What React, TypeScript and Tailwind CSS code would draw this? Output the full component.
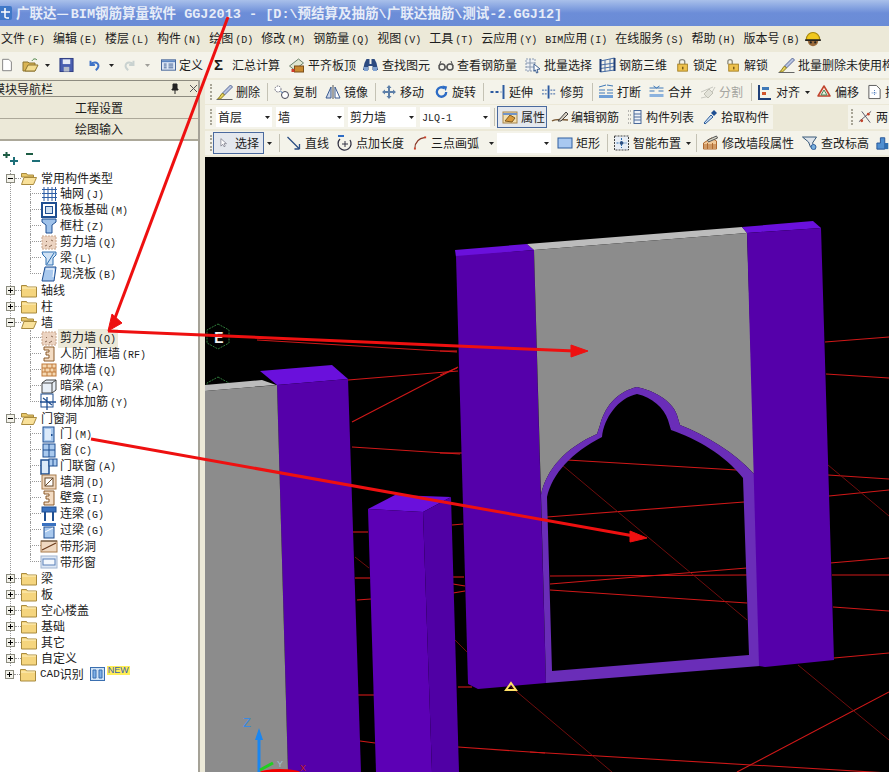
import React from 'react';

const Ic = ({ w = 16, children }: { w?: number; children: React.ReactNode }) => (
  <svg width={w} height={16} viewBox="0 0 16 16" className="shrink-0 overflow-visible">
    {children}
  </svg>
);

const Lat = ({ children }: { children: React.ReactNode }) => (
  <span className="font-['Liberation_Mono',monospace] text-[10px]">{children}</span>
);

const Arrow = ({ className = '' }: { className?: string }) => (
  <svg width={5} height={3} viewBox="0 0 5 3" className={`shrink-0 ${className}`}>
    <path d="M0 0h5L2.5 3z" fill="#222" />
  </svg>
);

const Grip = () => <div className="w-[2px] h-4 shrink-0 border-l-2 border-dotted border-[#a8a597]" />;
const Sep = () => <div className="w-px h-[18px] shrink-0 mr-[5px] bg-[#c4c2b4]" />;

const Tool = ({ w, icon, label, gray, children }: { w?: string; icon: React.ReactNode; label: React.ReactNode; gray?: boolean; children?: React.ReactNode }) => (
  <div className={`flex items-center gap-[3px] shrink-0 whitespace-nowrap ${w ?? ''} ${gray ? 'text-[#a5a5a0]' : ''}`}>
    {icon}
    <span>{label}</span>
    {children}
  </div>
);

const Select = ({ w, children }: { w: string; children?: React.ReactNode }) => (
  <div className={`flex items-center justify-between h-5 bg-white pl-[2px] pr-[2px] shrink-0 ${w}`}>
    <span>{children}</span>
    <Arrow />
  </div>
);

// toolbar icons
const blue = '#3d6fb8';
const NewDoc = () => <Ic w={14}><path d="M3 1.5h7l3 3v10H3z" fill="#fff" stroke="#777" /></Ic>;
const OpenIc = () => <Ic w={18}><path d="M1 5h5l1 1h6v8H1z" fill="#d9b454" stroke="#8c7430" /><path d="M3 14l3-6h10l-3 6z" fill="#f3dc8e" stroke="#8c7430" /><path d="M10 4c1-2 3-3 5-1" stroke="#3f7d3a" fill="none" /></Ic>;
const SaveIc = () => <Ic w={15}><rect x="1" y="1" width="14" height="14" fill="#4a5fb0" stroke="#2b3a80" /><rect x="4" y="2" width="8" height="5" fill="#e8ecf5" /><rect x="5" y="10" width="6" height="5" fill="#b5bcc9" /></Ic>;
const UndoIc = ({ c }: { c: string }) => <Ic w={14}><path d="M4 3v5h5M4.5 7.5C7 4 12 4.500 13 8c.6 2.500-1 4.500-3 6" fill="none" stroke={c} strokeWidth="2.200" /></Ic>;
const RedoIc = () => <Ic w={14}><path d="M12 3v5H7M11.500 7.500C9 4 4 4.500 3 8c-.6 2.500 1 4.500 3 6" fill="none" stroke="#c9d2d0" strokeWidth="2.200" /></Ic>;
const DefIc = () => <Ic w={15}><rect x="0.500" y="2.500" width="15" height="11" fill="#dfe8f5" stroke="#3e5f95" /><rect x="1" y="3" width="14" height="2" fill="#5c86c2" /><path d="M3 7h3M3 9h3M3 11h3M8 7h5M8 9h5M8 11h5" stroke="#3e5f95" /></Ic>;
const AlignTop = () => <Ic w={17}><path d="M1 9l9-7 5 4-9 7z" fill="#dfe6d0" stroke="#6a7f6a" /><rect x="6" y="9" width="9" height="6" fill="#c8892f" stroke="#7a4f1a" /><rect x="3" y="12" width="3" height="3" fill="#d23c2b" /></Ic>;
const Binoc = () => <Ic w={17}><path d="M2 6l2-4h3v5h2V2h3l2 4 1.500 7H10V9H6v4H.5z" fill="#2c4a80" /><rect x="1.500" y="10" width="4" height="4" fill="#7ea0d0" /><rect x="10.500" y="10" width="4" height="4" fill="#7ea0d0" /></Ic>;
const Glasses = () => <Ic w={16}><circle cx="4" cy="10" r="3" fill="none" stroke="#555" strokeWidth="1.500" /><circle cx="12" cy="10" r="3" fill="none" stroke="#555" strokeWidth="1.500" /><path d="M7 10h2M1 9l2-5M15 9l-2-5" stroke="#555" /></Ic>;
const Batch = () => <Ic w={16}><path d="M1 2h9v12H1z" fill="#eef1f5" stroke="#8a9ab0" strokeDasharray="2 1" /><path d="M1 6h9M1 10h9M5 2v12" stroke="#8a9ab0" /><path d="M9 7l6 5-3 .5 1 3-1.500.5-1-3L9 14z" fill="#fff" stroke="#3d5f90" /></Ic>;
const Rebar3 = () => <Ic w={17}><path d="M1 4l14-3v12L1 15z" fill="none" stroke="#4a6ea5" /><path d="M5.500 3v12M10.500 2v12M1 8l14-2M1 11.500l14-2" stroke="#4a6ea5" /><path d="M1 2v13M15 1v13" stroke="#1f3f78" strokeWidth="2" /></Ic>;
const Lock = ({ open }: { open?: boolean }) => <Ic w={14}><path d={open ? 'M1 7V4c0-3 5-3 5 0v3' : 'M4 7V4c0-3 6-3 6 0v3'} fill="none" stroke="#8a8a80" strokeWidth="1.500" /><rect x="2" y="7" width="11" height="8" fill="#eec24e" stroke="#a07a1e" /><rect x="7" y="10" width="1.500" height="3" fill="#6a4d10" /></Ic>;
const Brush = () => <Ic w={17}><path d="M14 1l2 2-8 8-2-2z" fill="#b8c4e0" stroke="#5a6a9a" /><path d="M6 9l2 2-4 4H1c2-1 2-3 5-6z" fill="#e6d25a" stroke="#8a7a20" /><path d="M0 15.500h16" stroke="#666" /></Ic>;
const CopyIc = () => <Ic w={17}><circle cx="4.500" cy="5" r="3" fill="#fff" stroke="#667" strokeDasharray="1.500 1" /><circle cx="11.500" cy="11" r="3.500" fill="#fff" stroke="#445" /><path d="M7 7l2 2" stroke={blue} /></Ic>;
const Mirror = () => <Ic><path d="M1 14L6 3v11z" fill="#cdd8ea" stroke="#3a5a90" /><path d="M15 14L10 3v11z" fill="#fff" stroke="#3a5a90" /><path d="M8 1v14" stroke="#555" /></Ic>;
const MoveIc = () => <Ic><path d="M8 1l2.500 3H9v3h3V5.500L15 8l-3 2.500V9H9v3h1.500L8 15l-2.500-3H7V9H4v1.500L1 8l3-2.500V7h3V4H5.500z" fill="#5d7fa8" /></Ic>;
const Rotate = () => <Ic w={15}><path d="M13 8a5 5 0 1 1-2-4" fill="none" stroke="#2d6cc5" strokeWidth="2.500" /><path d="M9 1l5 1-1.500 5z" fill="#2d6cc5" /></Ic>;
const Extend = () => <Ic w={17}><path d="M1 8h3M6 8h3" stroke="#2c5aa0" strokeWidth="2" /><path d="M11 8h2" stroke="#2c5aa0" strokeDasharray="1 1" /><path d="M14 1v14" stroke="#2c5aa0" strokeWidth="2" /></Ic>;
const Trim = () => <Ic w={15}><path d="M7 1v14" stroke="#2c5aa0" strokeWidth="2" /><path d="M0 6h6M0 10h6M9 6h5M9 10h5" stroke="#2c5aa0" strokeDasharray="2 1" /></Ic>;
const Break = () => <Ic><path d="M1 3l7-2M9 1l6 1M1 6h6M9 6h6" stroke="#3f79b8" /><path d="M1 9h6M9 9h6" stroke="#3f79b8" /><rect x="1" y="11" width="14" height="3" fill="#6f9fd6" /></Ic>;
const Merge = () => <Ic w={17}><path d="M1 4h14M1 7h5M10 7h5" stroke="#3f79b8" /><path d="M5 2l3 2 3-2" fill="none" stroke="#3f79b8" /><rect x="1" y="10" width="14" height="3" fill="#8cb3de" /></Ic>;
const Split = () => <Ic><path d="M1 14l9-2 5-9M1 8l12-5" stroke="#c8c8c0" fill="none" /><path d="M9 5l4 4-5 5-4-4z" fill="#e2e2d8" stroke="#c0c0b4" /></Ic>;
const AlignIc = () => <Ic><path d="M2 1v14h12" stroke="#1f3f78" strokeWidth="2" fill="none" /><rect x="5" y="3" width="7" height="3" fill="#3f79b8" /><rect x="5" y="8" width="4" height="3" fill="#d2542a" /></Ic>;
const Offset = () => <Ic><path d="M8 2l6 10H2z" fill="#fbe3d8" stroke="#c0432c" strokeWidth="1.500" strokeLinejoin="round" /><path d="M8 6l3 5H5z" fill="#e6f0e2" stroke="#4a8a5a" /></Ic>;
const PageIc = () => <Ic w={15}><path d="M2 1h8l4 4v10H2z" fill="#fff" stroke="#555" /><path d="M5 9h6M8 6v6" stroke={blue} strokeDasharray="1 1" /></Ic>;
const Props = () => <Ic><rect x="1" y="3" width="14" height="11" fill="#f2dfb0" stroke="#a8854a" /><path d="M3 12l5-6 5 3-3 4z" fill="#d99a3a" stroke="#805a20" /><path d="M1 5h14" stroke="#6f93c8" strokeWidth="2" /></Ic>;
const EditRebar = () => <Ic><path d="M0 12c3-2 7-2 16-1" stroke="#7a5a35" strokeWidth="1.500" fill="none" /><path d="M6 12l8-9 2 2-7 7z" fill="#d8d0c0" stroke="#444" /></Ic>;
const ListIc = () => <Ic><path d="M1 2h3M1 6h3M1 10h3M1 14h3" stroke="#777" strokeDasharray="1 1" /><rect x="7" y="1.500" width="7" height="13" fill="#eef2f8" stroke="#4a6a9a" /><path d="M7 5h7M7 8h7M7 11h7" stroke="#4a6a9a" /></Ic>;
const Dropper = () => <Ic><path d="M2 14l7-8 2 2-8 7z" fill="#cfe2f5" stroke="#2a5a9a" /><path d="M9 4l3-3 3 3-3 3z" fill="#1f4f92" /></Ic>;
const Cursor = () => <Ic w={10}><path d="M3 1v12l3-3 2 4 2-1-2-4h4z" fill="#fff" stroke="#667" /></Ic>;
const LineIc = () => <Ic w={17}><path d="M2 2l12 12M14 14v-5M14 14H9" stroke="#2c4f85" strokeWidth="1.300" fill="none" /></Ic>;
const PtLen = () => <Ic><path d="M3 4a6.500 6.500 0 1 0 10 1" fill="none" stroke="#334" strokeWidth="1.300" /><path d="M8 6v6M5 9h6" stroke="#334" /><path d="M1 1h6" stroke="#2d6cc5" strokeWidth="2" /></Ic>;
const ArcIc = () => <Ic w={15}><path d="M2 14c0-7 4-11 11-12" fill="none" stroke="#8a3a2a" strokeWidth="1.300" /><rect x="1" y="13" width="2" height="2" fill="#d2402a" /><rect x="12" y="1" width="2" height="2" fill="#d2402a" /></Ic>;
const RectIc = () => <Ic><rect x="1" y="3" width="14" height="10" fill="#a8c8f0" stroke="#2f5f9f" /></Ic>;
const Smart = () => <Ic w={17}><rect x="1" y="1" width="14" height="14" fill="#e8eef5" stroke="#444" strokeDasharray="2 1" /><path d="M8 3v10M3 8h10" stroke="#2f6fb0" strokeDasharray="2 1" /><rect x="6.500" y="6.500" width="3" height="3" fill="#2f4f7f" /></Ic>;
const WallEdit = () => <Ic w={17}><path d="M1 14V8l8-5 5 3v8z" fill="#f0c99a" stroke="#b06a30" /><path d="M1 10h13M1 12h13M5 8v6M10 8v6" stroke="#b06a30" /><path d="M5 5l9-4 1 2-9 4z" fill="#d8d8c8" stroke="#555" /></Ic>;
const Funnel = () => <Ic w={17}><path d="M1 2h14l-4 6 3 6-5-2-2-5z" fill="#dfe5ea" stroke="#3a5a7a" /><circle cx="12" cy="12" r="2.500" fill="#7ab0dc" stroke="#2f5f9f" /></Ic>;
const Bldg = () => <Ic w={14}><path d="M1 15V8h4V2h5v13z" fill="#4f8fd0" stroke="#1f4f92" /><path d="M10 8h4v7h-4z" fill="#2f6fb0" /></Ic>;
const CrossIc = () => <Ic w={15}><path d="M1 13L14 2M4 2l9 12" stroke="#556" /><circle cx="4" cy="12" r="1.500" fill="#c0432c" /><circle cx="11" cy="5" r="1.500" fill="#c0432c" /></Ic>;

// tree icons
const GridI = () => <Ic><path d="M3 1v14M7 1v14M11 1v14M14.500 1v14M1 3.500h15M1 7.500h15M1 11.500h15" stroke="#2d5da5" /></Ic>;
const RaftI = () => <Ic><rect x="1" y="1" width="14" height="14" fill="#fff" stroke="#1f4f92" strokeWidth="2" /><rect x="4.500" y="4.500" width="7" height="7" fill="#cfe0f2" stroke="#1f4f92" /></Ic>;
const ColI = () => <Ic><path d="M1 1h14v3l-4 3v8H5V7L1 4z" fill="#9fc2ea" stroke="#1f4f92" /></Ic>;
const WallI = () => <Ic><rect x="1" y="2" width="14" height="13" fill="#ecd4c2" stroke="#c9a68c" strokeDasharray="2 1" /><path d="M4 12l2-1M8 13l3-2M10 6l2 1M5 7l1 1" stroke="#8a6a55" /></Ic>;
const BeamI = () => <Ic><path d="M1 2h14v3l-3 3v7H5V8L2 5z" fill="#cfe2f5" stroke="#2f6fb0" /><path d="M6 14l7-11" stroke="#2f6fb0" /></Ic>;
const SlabI = () => <Ic><path d="M4 1h11l-2 14H1z" fill="#a9c9ee" stroke="#1f4f92" /><path d="M5 3h8l-1 8" stroke="#fff" fill="none" /></Ic>;
const FrameI = () => <Ic><path d="M3 1h10v14H3v-3h5V9H5V6h3V4H3z" fill="#f3dcc4" stroke="#8a5a2a" /></Ic>;
const BrickI = () => <Ic><rect x="1" y="2" width="14" height="12" fill="#f5d8b2" stroke="#c07a3a" /><path d="M1 6h14M1 10h14M6 2v4M11 2v4M4 6v4M9 6v4M13 6v4M6 10v4M11 10v4" stroke="#c07a3a" /></Ic>;
const HiddenI = () => <Ic><path d="M1 5l4-3h10v10l-4 3H1z" fill="#e8eff7" stroke="#444" /><path d="M1 5h10v10M11 5l4-3" fill="none" stroke="#444" /></Ic>;
const RebarI = () => <Ic><rect x="0" y="0" width="12" height="13" fill="none" stroke="#1f4f92" /><path d="M-1 8h16M6 3v13M2 4l9 7" stroke="#1f4f92" strokeWidth="1.300" /></Ic>;
const DoorI = () => <Ic><rect x="2" y="1" width="11" height="15" fill="#a9c9ee" stroke="#1f4f92" /><rect x="4" y="3" width="6" height="11" fill="#dceafa" /><rect x="10" y="8" width="1.500" height="2" fill="#1f4f92" /></Ic>;
const WinI = () => <Ic><rect x="2" y="2" width="12" height="13" fill="#a9c9ee" stroke="#1f4f92" /><path d="M8 2v13M2 8h12" stroke="#1f4f92" /></Ic>;
const DoorWinI = () => <Ic><rect x="0" y="2" width="8" height="14" fill="#dceafa" stroke="#1f4f92" strokeWidth="1.500" /><rect x="8" y="1" width="8" height="7" fill="#a9c9ee" stroke="#1f4f92" /><path d="M12 1v7" stroke="#1f4f92" /></Ic>;
const HoleI = () => <Ic><rect x="1" y="1" width="14" height="14" fill="#efd8c0" stroke="#a87a4a" /><rect x="4" y="4" width="8" height="8" fill="#fff" stroke="#6a4a2a" /><path d="M4 12l8-8" stroke="#6a4a2a" /></Ic>;
const LinkI = () => <Ic><rect x="1" y="1" width="14" height="5" fill="#3a72c0" stroke="#1f4f92" /><path d="M4 6v9M12 6v9" stroke="#1f4f92" strokeWidth="2" /></Ic>;
const LintelI = () => <Ic><rect x="1" y="1" width="14" height="3" fill="#3a72c0" /><rect x="3" y="5" width="10" height="11" fill="#a9c9ee" stroke="#1f4f92" /><path d="M4 10l8-4" stroke="#fff" /></Ic>;
const StripHI = () => <Ic><rect x="0" y="3" width="16" height="11" fill="#efd8c0" stroke="#a87a4a" /><path d="M1 12l14-7" stroke="#6a3a1a" strokeWidth="1.200" /><path d="M0 3h16" stroke="#5a4a3a" /></Ic>;
const StripWI = () => <Ic><rect x="0" y="2" width="16" height="12" fill="#dde7f5" stroke="#a0b4d0" /><rect x="2" y="5" width="12" height="6" fill="#f4f8fd" stroke="#5a80b8" /></Ic>;

const FolderClosed = () => (
  <Ic><path d="M.5 3.500h5l1 1.500h9v10H.5z" fill="#f5d57e" stroke="#a88a3e" /><path d="M1 6h14" stroke="#fff2c2" /></Ic>
);
const FolderOpen = () => (
  <Ic><path d="M.5 3.500h5l1 1.500h6v2H.5z" fill="#e8c86a" stroke="#a88a3e" /><path d="M.5 14.500L3 7.500h12.500l-3 7z" fill="#f9e19a" stroke="#a88a3e" /></Ic>
);
const Box = ({ open }: { open?: boolean }) => (
  <div className="relative w-[9px] h-[9px] shrink-0 border border-[#8c8c80] bg-[#f3f2ea] flex items-center justify-center">
    <div className="w-[5px] h-px bg-black" />
    {!open && <div className="absolute w-px h-[5px] bg-black" />}
  </div>
);

const Root = ({ open, children }: { open?: boolean; children: React.ReactNode }) => (
  <div className="flex items-center h-4 -ml-[5px] whitespace-nowrap">
    <Box open={open} />
    <div className="w-[6px] shrink-0 border-t border-dotted border-[#999]" />
    {open ? <FolderOpen /> : <FolderClosed />}
    <span className="ml-[4px]">{children}</span>
  </div>
);

const Child = ({ icon, label, hot, last, lat }: { icon: React.ReactNode; label: string; lat?: string; hot?: boolean; last?: boolean }) => (
  <div className="flex items-center h-4 ml-[19px] whitespace-nowrap">
    <div className="w-[11px] h-4 shrink-0 flex flex-col">
      <div className="h-2 border-l border-b border-dotted border-[#999]" />
      {!last && <div className="h-2 border-l border-dotted border-[#999]" />}
    </div>
    {icon}
    <span className={`ml-[1px] px-[2px] ${hot ? 'bg-[#ece9d8]' : ''}`}>
      {label}
      {lat && <span className="ml-[2px]"><Lat>{lat}</Lat></span>}
    </span>
  </div>
);

const menus: [string, string, string][] = [
  ['文件', '', '(F)'], ['编辑', '', '(E)'], ['楼层', '', '(L)'], ['构件', '', '(N)'], ['绘图', '', '(D)'], ['修改', '', '(M)'],
  ['钢筋量', '', '(Q)'], ['视图', '', '(V)'], ['工具', '', '(T)'], ['云应用', '', '(Y)'], ['应用', 'BIM', '(I)'],
  ['在线服务', '', '(S)'], ['帮助', '', '(H)'], ['版本号', '', '(B)'],
];

const thick: [number, number, number, number][] = [
  [825, 342, 889, 337], [826, 374, 889, 378], [828, 475, 889, 479], [829, 496, 889, 490], [830, 563, 889, 558], [832, 575, 889, 575],
  [833, 607, 889, 611], [834, 658, 889, 653], [567, 460, 737, 470], [547, 517, 744, 502], [550, 576, 747, 575], [550, 584, 747, 568],
  [550, 590, 747, 603], [530, 752, 889, 773], [353, 532, 368, 532], [355, 578, 370, 578], [357, 600, 371, 599], [358, 695, 374, 695],
  [360, 741, 375, 743], [452, 525, 463, 524], [453, 577, 464, 577], [453, 584, 465, 586], [453, 593, 465, 591], [458, 687, 472, 687],
  [458, 747, 545, 753], [257, 340, 457, 352], [348, 380, 458, 371], [352, 422, 458, 367], [352, 447, 460, 454], [440, 375, 457, 368],
  [440, 453, 462, 453], [737, 772, 889, 692], [440, 351, 457, 351],
];
const thin: [number, number, number, number][] = [
  [828, 465, 889, 516], [562, 465, 747, 620], [798, 665, 889, 740], [510, 686, 612, 772], [355, 557, 369, 568], [455, 640, 467, 652],
];

const Scene = () => (
  <svg viewBox="205 157 684 615" className="block w-[684px] h-[615px]">
    <rect x="205" y="157" width="684" height="615" fill="#000" />
    {thick.map(([a, b, c, d], i) => <line key={i} x1={a} y1={b} x2={c} y2={d} stroke="#d01818" strokeWidth="1.100" />)}
    {thin.map(([a, b, c, d], i) => <line key={i} x1={a} y1={b} x2={c} y2={d} stroke="#8a1010" strokeWidth="0.800" />)}
    <path d="M218 324l11 6v13l-11 6-11-6v-13z" fill="none" stroke="#2f7a3a" strokeDasharray="2 1" />
    <path d="M218 377l11 6v13l-11 6-11-6v-13z" fill="none" stroke="#2f7a3a" strokeDasharray="2 1" />
    <text x="214" y="343" fill="#f0f0f0" fontSize="16" fontFamily="Liberation Mono, monospace" fontWeight="bold">E</text>

    {/* near wall and pier */}
    <path d="M260 371L332 365 348 379 277 385z" fill="#6a10dc" />
    <path d="M277 385L348 379 361 772H288z" fill="#5500aa" />
    <path d="M205 385L262 380 276 385 205 391z" fill="#bcbcbc" />
    <path d="M205 391L277 385 288 772H205z" fill="#8c8c8c" />

    {/* middle column */}
    <path d="M368 509L395 495 451 497 423 512z" fill="#6a10dc" />
    <path d="M368 509L423 512 432 772H376z" fill="#5c00b5" />
    <path d="M423 512L451 497 459 772H432z" fill="#5000a5" />

    {/* arch wall */}
    <path d="M455 250L527 244 534 250 456 257z" fill="#6a10dc" />
    <path d="M456 256L534 250 546 683 478 689 468 684z" fill="#5500aa" />
    <path d="M527 244L742 227 747 233 534 250z" fill="#bcbcbc" />
    <path d="M534 250L747 233 755 475C735 452 705 435 680 425L677 415C672 400 652 390 637 387 620 391 606 403 600 425L597 434C565 448 546 470 541 495z" fill="#8c8c8c" />
    <path
      fillRule="evenodd"
      fill="#6a2db8"
      d="M541 495C546 470 565 448 597 434L600 425C606 403 620 391 637 387 652 390 672 400 677 415L680 425C705 435 735 452 755 475L760 666 546 683zM547 497C552 474 572 452 602 437 604 418 618 398 637 394 652 397 664 408 668 420L671 430C697 439 725 455 743 478L749 655 552 671z"
    />
    <path d="M742 227L813 221 821 228 747 233z" fill="#6a10dc" />
    <path d="M747 233L821 228 834 660 765 667 759 666z" fill="#5500aa" />

    <path d="M511 683l5 7h-10z" fill="none" stroke="#ffe066" strokeWidth="2" />

    {/* axis marker */}
    <path d="M259 772V740" stroke="#1a86f0" strokeWidth="3" />
    <path d="M259 728l4 12h-8z" fill="#1a86f0" />
    <path d="M260 770l13-7" stroke="#20d020" strokeWidth="3" />
    <ellipse cx="280" cy="773" rx="21" ry="4" fill="#f00000" />
    <text x="243" y="727" fill="#3a8ae0" fontSize="13" fontFamily="Liberation Sans, sans-serif">Z</text>
    <text x="277" y="767" fill="#a0c0d0" fontSize="9" fontFamily="Liberation Sans, sans-serif">Y</text>
    <text x="300" y="771" fill="#c02020" fontSize="9" fontFamily="Liberation Sans, sans-serif">X</text>
  </svg>
);

const Annotations = () => (
  <svg viewBox="0 0 889 772" className="absolute inset-0 w-[889px] h-[772px] pointer-events-none">
    <g fill="#ee1010" stroke="#ee1010">
      <line x1="228" y1="17" x2="115" y2="318" strokeWidth="3" />
      <path d="M108 331L112 314 122 323z" />
      <line x1="108" y1="331" x2="575" y2="351" strokeWidth="3" />
      <path d="M588 351L571 345 571 357z" />
      <line x1="91" y1="439" x2="634" y2="536" strokeWidth="3" />
      <path d="M647 538L630 531 630 542z" />
    </g>
  </svg>
);

export default function App() {
  return (
    <div className="relative w-[889px] h-[772px] overflow-hidden bg-[#ece9d8] text-[12px] leading-4 text-[#1c1c1c] font-['Noto_Sans_CJK_SC',sans-serif]">
      {/* title bar */}
      <div className="flex items-center gap-[3px] h-[26px] bg-gradient-to-b from-[#a9c0ea] via-[#6c8dd8] to-[#6a8cd6] text-[#e6ecf8]">
        <svg width={13} height={16} viewBox="0 0 13 16" className="shrink-0">
          <rect x="-3" y="1" width="15" height="14" rx="2" fill="#3f78c8" />
          <path d="M1 7h9M5 3v9c0 1 1 1 4 1" fill="none" stroke="#fff" strokeWidth="1.500" />
        </svg>
        <span className="whitespace-pre font-bold text-[13.5px] font-['Liberation_Mono','Noto_Sans_CJK_SC',monospace]">
          广联达<span className="mr-[2px] font-['Noto_Sans_CJK_SC',sans-serif]">—</span>BIM钢筋算量软件 GGJ2013 - [D:\预结算及抽筋\广联达抽筋\测试-2.GGJ12]
        </span>
      </div>

      {/* menu */}
      <div className="flex items-center gap-2 h-[26px] pl-px whitespace-nowrap">
        {menus.map(([t, pre, key]) => (
          <span key={key + t} className="shrink-0">
            {pre && <Lat>{pre}</Lat>}
            {t}
            <span className="ml-[2px]"><Lat>{key}</Lat></span>
          </span>
        ))}
        <svg width={18} height={18} viewBox="0 0 16 16" className="shrink-0 -ml-[3px]">
          <circle cx="8" cy="10" r="4.500" fill="#9a6a3a" />
          <path d="M2 9c0-9 12-9 12 0z" fill="#f0c81e" stroke="#a8880e" />
          <path d="M1 9h14" stroke="#222" strokeWidth="1.500" />
          <circle cx="6" cy="11" r="1" fill="#222" />
          <circle cx="10" cy="11" r="1" fill="#222" />
        </svg>
      </div>

      {/* main toolbar */}
      <div className="flex items-center h-[26px] bg-[#f4f3ea] whitespace-nowrap">
        <NewDoc />
        <div className="ml-[7px]"><OpenIc /></div>
        <Arrow className="ml-[6px]" />
        <div className="ml-[9px]"><SaveIc /></div>
        <div className="ml-[6px] w-px h-5 bg-[#c4c2b4]" />
        <div className="ml-[7px]"><UndoIc c="#3f73c8" /></div>
        <Arrow className="ml-[8px]" />
        <div className="ml-[9px]"><RedoIc /></div>
        <Arrow className="ml-[8px] opacity-40" />
        <div className="ml-[7px] mr-[4px] w-px h-5 bg-[#c4c2b4]" />
        <Tool w="w-[53px]" icon={<DefIc />} label="定义" />
        <Tool w="w-[74px]" icon={<span className="w-[15px] font-bold text-[15px] font-['Liberation_Sans',sans-serif]">Σ</span>} label="汇总计算" />
        <Tool w="w-[74px]" icon={<AlignTop />} label="平齐板顶" />
        <Tool w="w-[76px]" icon={<Binoc />} label="查找图元" />
        <Tool w="w-[87px]" icon={<Glasses />} label="查看钢筋量" />
        <Tool w="w-[74px]" icon={<Batch />} label="批量选择" />
        <Tool w="w-[77px]" icon={<Rebar3 />} label="钢筋三维" />
        <Tool w="w-[51px]" icon={<Lock />} label="锁定" />
        <Tool w="w-[51px]" icon={<Lock open />} label="解锁" />
        <Tool icon={<Brush />} label="批量删除未使用构件" />
      </div>

      <div className="flex h-[694px] pt-[2px]">
        {/* navigator */}
        <div className="w-[205px] shrink-0 pr-[5px]">
          <div className="h-full bg-white border-r-2 border-[#a5a297] flex flex-col">
            <div className="flex items-center h-[17px] shrink-0 bg-[#ece9d8] border-t border-[#8d8b80] border-b -ml-[7px] whitespace-nowrap">
              <span className="w-[180px]">模块导航栏</span>
              <svg width={10} height={12} viewBox="0 0 10 12" className="shrink-0">
                <path d="M3 1h4v5h1v1H2V6h1zM5 7v4" fill="#222" stroke="#222" />
              </svg>
              <svg width={9} height={9} viewBox="0 0 9 9" className="ml-[9px] shrink-0">
                <path d="M1 1l7 7M8 1L1 8" stroke="#555" />
              </svg>
            </div>
            <div className="flex items-center justify-center h-[22px] shrink-0 bg-[#ece9d8] border-b border-[#aca899]">工程设置</div>
            <div className="flex items-center justify-center h-[22px] shrink-0 bg-[#ece9d8] border-b-2 border-[#aca899]">绘图输入</div>

            <div className="flex items-center h-[28px] shrink-0 pl-[2px] gap-[6px] pt-[6px]">
              <svg width={17} height={14} viewBox="0 0 17 14">
                <path d="M1 4h7M4.500 1v6" stroke="#1d5c44" strokeWidth="2" />
                <path d="M8 10h8M12 6v8" stroke="#1d6f78" strokeWidth="2" />
              </svg>
              <svg width={15} height={14} viewBox="0 0 15 14">
                <path d="M1 3h7" stroke="#1d5c44" strokeWidth="2" />
                <path d="M7 10h8" stroke="#1d6f78" strokeWidth="2" />
              </svg>
            </div>

            <div className="pt-[1px]">
              <div className="ml-[10px] mt-2 border-l border-dotted border-[#999]">
                <div className="-mt-2">
                  <Root open>常用构件类型</Root>
                </div>
                <Child icon={<GridI />} label="轴网" lat="(J)" />
                <Child icon={<RaftI />} label="筏板基础" lat="(M)" />
                <Child icon={<ColI />} label="框柱" lat="(Z)" />
                <Child icon={<WallI />} label="剪力墙" lat="(Q)" />
                <Child icon={<BeamI />} label="梁" lat="(L)" />
                <Child icon={<SlabI />} label="现浇板" lat="(B)" last />
                <Root>轴线</Root>
                <Root>柱</Root>
                <Root open>墙</Root>
                <Child icon={<WallI />} label="剪力墙" lat="(Q)" hot />
                <Child icon={<FrameI />} label="人防门框墙" lat="(RF)" />
                <Child icon={<BrickI />} label="砌体墙" lat="(Q)" />
                <Child icon={<HiddenI />} label="暗梁" lat="(A)" />
                <Child icon={<RebarI />} label="砌体加筋" lat="(Y)" last />
                <Root open>门窗洞</Root>
                <Child icon={<DoorI />} label="门" lat="(M)" />
                <Child icon={<WinI />} label="窗" lat="(C)" />
                <Child icon={<DoorWinI />} label="门联窗" lat="(A)" />
                <Child icon={<HoleI />} label="墙洞" lat="(D)" />
                <Child icon={<FrameI />} label="壁龛" lat="(I)" />
                <Child icon={<LinkI />} label="连梁" lat="(G)" />
                <Child icon={<LintelI />} label="过梁" lat="(G)" />
                <Child icon={<StripHI />} label="带形洞" />
                <Child icon={<StripWI />} label="带形窗" last />
                <Root>梁</Root>
                <Root>板</Root>
                <Root>空心楼盖</Root>
                <Root>基础</Root>
                <Root>其它</Root>
                <Root>自定义</Root>
              </div>
              <div className="ml-[10px]">
                <Root>
                  <span className="flex items-center">
                    <span className="font-['Liberation_Mono',monospace] text-[11px]">CAD</span>识别
                    <svg width={15} height={14} viewBox="0 0 15 14" className="ml-[6px]">
                      <rect x="0.500" y="0.500" width="14" height="13" fill="#cfe2f5" stroke="#3a6fb0" />
                      <path d="M3 3h3v8H3zM9 3h3v8H9z" fill="#7fb0e6" stroke="#3a6fb0" />
                    </svg>
                    <span className="mb-[7px] ml-[2px] h-[9px] px-px bg-[#ffee55] text-[#3a5fb0] text-[9px] leading-[9px] font-['Liberation_Sans',sans-serif]">NEW</span>
                  </span>
                </Root>
              </div>
            </div>
          </div>
        </div>

        {/* right side */}
        <div className="flex-1 min-w-0 flex flex-col">
          <div className="flex items-center h-6 bg-[#f4f3ea] pl-[5px] whitespace-nowrap">
            <div className="mr-[4px]"><Grip /></div>
            <Tool w="w-[51px]" icon={<Brush />} label="删除" />
            <Sep />
            <Tool w="w-[52px]" icon={<CopyIc />} label="复制" />
            <Tool w="w-[50px]" icon={<Mirror />} label="镜像" />
            <Sep />
            <Tool w="w-[53px]" icon={<MoveIc />} label="移动" />
            <Tool w="w-[49px]" icon={<Rotate />} label="旋转" />
            <Sep />
            <Tool w="w-[53px]" icon={<Extend />} label="延伸" />
            <Tool w="w-[50px]" icon={<Trim />} label="修剪" />
            <Sep />
            <Tool w="w-[50px]" icon={<Break />} label="打断" />
            <Tool w="w-[52px]" icon={<Merge />} label="合并" />
            <Tool w="w-[51px]" icon={<Split />} label="分割" gray />
            <Sep />
            <Tool w="w-[59px]" icon={<AlignIc />} label="对齐"><Arrow className="ml-[2px]" /></Tool>
            <Tool w="w-[51px]" icon={<Offset />} label="偏移" />
            <Tool icon={<PageIc />} label="拉" />
          </div>

          <div className="flex items-center h-6 mt-px whitespace-nowrap">
            <div className="flex items-center h-full w-[568px] shrink-0 bg-[#f4f3ea] pl-[5px]">
              <div className="mr-[4px]"><Grip /></div>
              <div className="flex items-center gap-1">
                <Select w="w-[56px]">首层</Select>
                <Select w="w-[68px]">墙</Select>
                <Select w="w-[68px]">剪力墙</Select>
                <Select w="w-[70px]"><Lat>JLQ-1</Lat></Select>
              </div>
              <div className="ml-1 mr-[2px] w-px h-[18px] bg-[#c4c2b4]" />
              <div className="flex items-center gap-[3px] w-[50px] h-[22px] pl-1 shrink-0 mr-[5px] border border-[#4a6a9e] bg-[#e4e8ee]">
                <Props />
                <span>属性</span>
              </div>
              <Tool w="w-[75px]" icon={<EditRebar />} label="编辑钢筋" />
              <Tool w="w-[75px]" icon={<ListIc />} label="构件列表" />
              <Tool w="w-[71px]" icon={<Dropper />} label="拾取构件" />
            </div>
            <div className="flex items-center h-full ml-[75px] flex-1 bg-[#f4f3ea] pl-[3px]">
              <div className="mr-[5px]"><Grip /></div>
              <Tool icon={<CrossIc />} label="两" />
            </div>
          </div>

          <div className="flex items-center h-6 mt-[2px] mb-[2px] bg-[#f4f3ea] pl-[5px] whitespace-nowrap">
            <div className="mr-px"><Grip /></div>
            <div className="flex items-center gap-[6px] w-[51px] h-[22px] pl-[5px] shrink-0 border border-[#4a6a9e] bg-[#e4e8ee]">
              <Cursor />
              <span>选择</span>
            </div>
            <div className="w-[15px] shrink-0 pl-[3px]"><Arrow /></div>
            <Sep />
            <Tool w="w-[52px]" icon={<LineIc />} label="直线" />
            <Tool w="w-[76px]" icon={<PtLen />} label="点加长度" />
            <Tool w="w-[84px]" icon={<ArcIc />} label="三点画弧"><Arrow className="ml-[7px]" /></Tool>
            <Select w="w-[54px] mr-[6px]" />
            <Tool w="w-[50px]" icon={<RectIc />} label="矩形" />
            <Sep />
            <Tool w="w-[83px]" icon={<Smart />} label="智能布置"><Arrow className="ml-[2px]" /></Tool>
            <Sep />
            <Tool w="w-[99px]" icon={<WallEdit />} label="修改墙段属性" />
            <Tool w="w-[75px]" icon={<Funnel />} label="查改标高" />
            <Bldg />
          </div>

          <Scene />
        </div>
      </div>

      <Annotations />
    </div>
  );
}
